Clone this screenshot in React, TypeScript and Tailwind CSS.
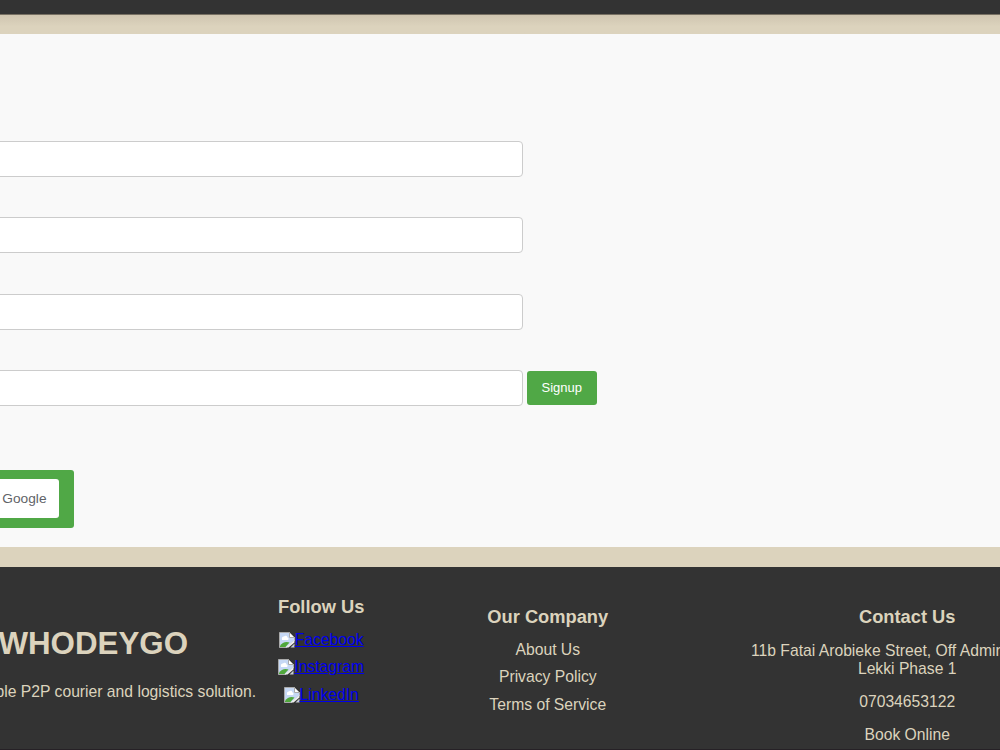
import React from 'react';

const FIELDS = ['name', 'email', 'phone', 'password'];
const SOCIAL_LINKS = ['Facebook', 'Instagram', 'LinkedIn'];
const COMPANY_LINKS = ['About Us', 'Privacy Policy', 'Terms of Service'];

function BrokenImage() {
  return (
    <svg className="h-4 w-4 shrink-0" viewBox="0 0 16 16" aria-hidden="true">
      <path d="M.5.5h10l5 5v3l-8 7h-7z" fill="#c6d8f5" stroke="#aaa" />
      <path d="M3 7a1.8 1.8 0 0 1 2-2.5 2 2 0 0 1 3.5 1A1.4 1.4 0 0 1 9 8H3z" fill="#fff" />
      <path d="M1 14c2-3.500 6-5 9.500-3.500L6.500 15H1z" fill="#50a83c" />
      <path d="M10.500.500v5h5z" fill="#fff" stroke="#aaa" />
      <path d="M15.500 8v2.500l-6 5h-3z" fill="#eee" />
      <path d="M15.500 11.500v4h-4z" fill="#c5ccd4" />
    </svg>
  );
}

function SignupForm() {
  return (
    <main className="h-[513px] bg-[#f9f9f9] pt-[107px]">
      <form onSubmit={(e) => e.preventDefault()}>
        <div className="flex flex-col gap-[40.300px]">
          {FIELDS.map((field) => (
            <div key={field} className="flex items-center gap-1">
              <input
                type={field === 'password' ? 'password' : 'text'}
                name={field}
                className="-ml-2 h-9 w-[530.500px] rounded-[4px] border border-[#ccc] bg-white px-2.5 outline-none"
              />
              {field === 'password' && (
                <button type="submit" className="h-[34px] w-[70.500px] rounded-[3px] bg-[#50a846] text-[13px] text-white">
                  Signup
                </button>
              )}
            </div>
          ))}
        </div>
      </form>
      <button type="button" className="mt-[64px] -ml-2 flex h-[58px] w-[82px] items-center justify-end rounded-[3px] bg-[#50a846] pr-[15px]">
        <span className="flex h-[39px] w-[67px] items-center justify-end rounded-[3px] bg-white pr-[12.500px] text-[13.700px] text-[#5f6368]">
          Google
        </span>
      </button>
    </main>
  );
}

function Footer() {
  return (
    <footer className="flex h-[183px] items-start border-b border-[#262126] bg-[#333] text-[15.700px] leading-[18px] whitespace-nowrap text-[#dcd3bd]">
      <div className="flex w-64 flex-col items-end pt-[59px]">
        <h1 className="mr-[68px] text-[31.300px] leading-9 font-bold">WHODEYGO</h1>
        <p className="mt-[21px]">Reliable P2P courier and logistics solution.</p>
      </div>
      <div className="ml-[22px] flex w-[87px] flex-col items-center pt-[29px]">
        <h3 className="text-[18.300px] leading-[21px] font-bold">Follow Us</h3>
        <ul className="mt-[14px] flex flex-col items-center gap-[9.300px]">
          {SOCIAL_LINKS.map((name) => (
            <li key={name}>
              <a href="#" className="flex items-center text-[#0000ee]">
                <BrokenImage />
                <span className="underline">{name}</span>
              </a>
            </li>
          ))}
        </ul>
      </div>
      <div className="ml-[123px] flex w-[121px] flex-col items-center pt-[39px]">
        <h3 className="text-[18.300px] leading-[21px] font-bold">Our Company</h3>
        <ul className="mt-[14px] flex flex-col items-center gap-[9.300px]">
          {COMPANY_LINKS.map((name) => (
            <li key={name}>
              <a href="#">{name}</a>
            </li>
          ))}
        </ul>
      </div>
      <div className="ml-[143px] flex w-[312px] shrink-0 flex-col items-center pt-[39px] text-center">
        <h3 className="text-[18.300px] leading-[21px] font-bold">Contact Us</h3>
        <p className="mt-[15px]">
          11b Fatai Arobieke Street, Off Admiralty Way,
          <br />
          Lekki Phase 1
        </p>
        <p className="mt-[15px]">07034653122</p>
        <p className="mt-[15px]">Book Online</p>
      </div>
    </footer>
  );
}

export default function App() {
  return (
    <div className="h-[750px] w-[1000px] overflow-hidden bg-[#dcd3bd] font-['Liberation_Sans',Arial,sans-serif]">
      <header className="h-3.5 bg-[#333]" />
      <div className="h-5 border-t border-[#777063] bg-linear-to-b from-[#cfc5b0] to-[#dcd3bd] to-60%" />
      <SignupForm />
      <div className="h-5" />
      <Footer />
    </div>
  );
}
